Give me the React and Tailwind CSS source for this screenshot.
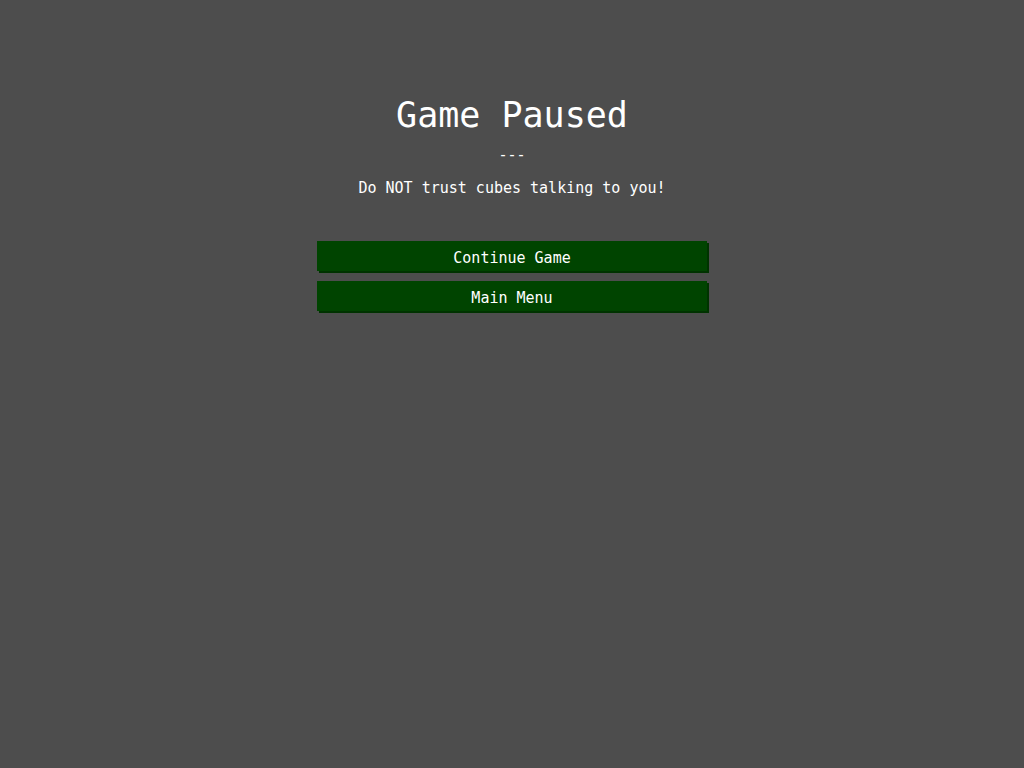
export default function App() {
  const mono = { fontFamily: '"DejaVu Sans Mono", "Liberation Mono", monospace' }
  return (
    <div
      className="w-[1024px] h-[768px] bg-[#4d4d4d] text-white flex flex-col items-center pt-[94px]"
      style={mono}
    >
      <h1 className="text-[35px] leading-[42px]">Game Paused</h1>
      <div className="mt-[10px] text-[15px] leading-[18px]">---</div>
      <p className="mt-[15px] text-[15px] leading-[18px]">Do NOT trust cubes talking to you!</p>
      <div className="mt-[44px] flex flex-col gap-[10px]">
        {['Continue Game', 'Main Menu'].map((label) => (
          <button
            key={label}
            className="w-[390px] h-[30px] pt-[4px] bg-[#004400] text-[15px] leading-[18px] text-white shadow-[2px_2px_0_#003300]"
          >
            {label}
          </button>
        ))}
      </div>
    </div>
  )
}
